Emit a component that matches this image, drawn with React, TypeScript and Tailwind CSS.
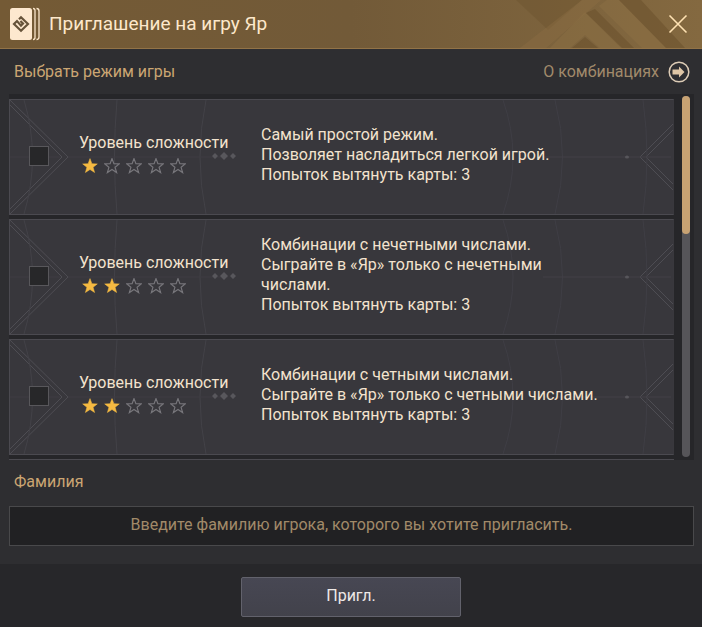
const modes = [
  {
    id: "simple",
    stars: 1,
    lines: ["Самый простой режим.", "Позволяет насладиться легкой игрой.", "Попыток вытянуть карты: 3"],
  },
  {
    id: "odd",
    stars: 2,
    lines: ["Комбинации с нечетными числами.", "Сыграйте в «Яр» только с нечетными числами.", "Попыток вытянуть карты: 3"],
  },
  {
    id: "even",
    stars: 2,
    lines: ["Комбинации с четными числами.", "Сыграйте в «Яр» только с четными числами.", "Попыток вытянуть карты: 3"],
  },
];

function CardsIcon() {
  return (
    <svg className="relative" width="30" height="34" viewBox="0 0 30 34" fill="none" aria-hidden="true">
      <path d="M23 1.500q2 0 2 2v27q0 2-2 2M26.500 1.500q2.500 0 2.500 2.500v26q0 2.500-2.500 2.500" stroke="#fbe6cb" strokeWidth="1.300" />
      <rect x="0" y="1" width="22" height="32" rx="2.500" fill="#fde8cf" />
      <path
        d="M9 12.200 11 10.200l7 6.800-7 6.800L4 17l3-3 4 4.600 2-2-2.600-2.600"
        stroke="#66533a"
        strokeWidth="2.200"
      />
    </svg>
  );
}

function HeaderOrnament() {
  return (
    <svg className="absolute top-0 right-0" width="190" height="48" viewBox="0 0 190 48" aria-hidden="true">
      <path d="M4 0h66L36 30z" fill="#6b522d" opacity=".4" />
      <path d="M70 0h19L34 48H8z" fill="#8f7044" opacity=".35" />
      <path d="M95 0h12l47 48h-24L87 6z" fill="#8f7044" opacity=".45" />
      <path d="M73 12 109 48H88L73 35 58 48H38z" fill="#8f7044" opacity=".45" />
      <path d="m83 9 39 39h-12L74 13z" fill="#684e29" opacity=".5" />
      <path d="M107 0h22l44 48h-19z" fill="#684e29" opacity=".5" />
      <path d="m73 37 13 11H60z" fill="#684e29" opacity=".5" />
    </svg>
  );
}

function Star({ filled }: { filled: boolean }) {
  return (
    <svg width="16" height="16" viewBox="0 0 16 16" aria-hidden="true">
      <path
        d="m8 .6 1.900 5.100 5.400.2-4.200 3.400 1.500 5.200L8 11.500l-4.600 3 1.500-5.200L.7 5.900l5.400-.2z"
        fill={filled ? "#f5ba42" : "none"}
        stroke={filled ? "#f5ba42" : "#77767b"}
        strokeWidth={filled ? 0.5 : 1.2}
      />
    </svg>
  );
}

function RowOrnament() {
  return (
    <>
      <svg className="absolute top-0 left-0" width="240" height="114" viewBox="0 0 240 114" fill="none" aria-hidden="true">
        <path d="M0 0l58 57L0 114M0 5l52 52-52 52" stroke="#4e4d53" />
        <path d="M14 0q17 57 0 114M107 0q-5 57 0 114M196 0q-12 57 0 114" stroke="#434248" />
        <path d="M0 57h50M58 57h160" stroke="#3e3d43" />
        <path d="m214 52 4 4-4 4-4-4zM205 53l3 3-3 3-3-3zM223 53l3 3-3 3-3-3z" fill="#58575c" />
      </svg>
      <svg className="absolute top-0 right-0" width="210" height="114" viewBox="0 0 210 114" fill="none" aria-hidden="true">
        <path d="M210 24l-33 33 33 33M210 30l-27 27 27 27" stroke="#4e4d53" />
        <path d="M92 0q15 57 0 114M40 0q20 57 0 114M180 0q8 57 0 114" stroke="#3f3e45" />
        <path d="M80 57h128" stroke="#424147" />
        <ellipse cx="164" cy="57" rx="2" ry="1.500" fill="#57565b" />
      </svg>
    </>
  );
}

function Mode({ mode }: { mode: (typeof modes)[number] }) {
  return (
    <label className="relative flex h-[116px] shrink-0 items-center border border-[#4b4a50] border-r-[#39383d] bg-[#38373c] pb-1">
      <RowOrnament />
      <input
        type="checkbox"
        className="relative mt-[2px] ml-[19px] size-5 shrink-0 appearance-none border border-[#58575b] bg-[#272729] checked:bg-[#c5a06b]"
      />
      <span className="relative ml-[30px] flex w-[182px] shrink-0 flex-col gap-[5px] pb-[3px]">
        <span className="whitespace-nowrap">Уровень сложности</span>
        <span className="ml-[3px] flex gap-[6px]">
          {[1, 2, 3, 4, 5].map((n) => (
            <Star key={n} filled={n <= mode.stars} />
          ))}
        </span>
      </span>
      <span className="relative block max-w-[348px]">
        {mode.lines.map((line) => (
          <span key={line} className="block">
            {line}
          </span>
        ))}
      </span>
    </label>
  );
}

export default function App() {
  return (
    <main className="flex min-h-screen flex-col bg-[#2e2e31] font-['Roboto','Noto_Sans',sans-serif] text-base leading-5 text-[#f3e3ce]">
      <header className="relative flex h-[49px] items-center gap-[9px] border-b border-[#927347] bg-linear-to-r from-[#745a35] via-[#725a38] to-[#846940] pr-3 pl-[10px]">
        <HeaderOrnament />
        <CardsIcon />
        <h1 className="relative flex-1 text-[19px] text-[#fde8cb]">Приглашение на игру Яр</h1>
        <button type="button" aria-label="Закрыть" className="relative flex size-6 items-center justify-center">
          <svg width="20" height="20" viewBox="0 0 20 20" stroke="#ffe2b3" strokeWidth="1.600" aria-hidden="true">
            <path d="m1.500 1.500 17 17M18.500 1.500l-17 17" />
          </svg>
        </button>
      </header>

      <div className="flex h-[45px] items-center justify-between pr-3 pl-[14px]">
        <h2 className="text-[#cba673]">Выбрать режим игры</h2>
        <button type="button" className="flex items-center gap-[9px] text-[#a18a6b]">
          О комбинациях
          <svg width="22" height="22" viewBox="0 0 22 22" aria-hidden="true">
            <circle cx="11" cy="11" r="9.800" fill="none" stroke="#dccbb5" strokeWidth="1.500" />
            <path d="M4.500 8.500H11V5.500l5.500 5.500-5.500 5.500v-3H4.500z" fill="#dfc6a6" />
          </svg>
        </button>
      </div>

      <section className="mr-2 ml-[9px] flex bg-[#262629]">
        <div className="flex flex-1 flex-col gap-1 border-b border-[#4b4a50] pt-[5px] pb-1">
          {modes.map((mode) => (
            <Mode key={mode.id} mode={mode} />
          ))}
        </div>
        <div className="mt-[2px] mr-1 mb-[3px] ml-2 w-2 rounded-full bg-[#565559]">
          <div className="h-[138px] rounded-full bg-[#c7a273]" />
        </div>
      </section>

      <div className="flex flex-col gap-[14px] pt-3 pr-2 pb-[18px] pl-[9px]">
        <label htmlFor="family" className="pl-[5px] text-[#cba673]">
          Фамилия
        </label>
        <input
          id="family"
          type="text"
          placeholder="Введите фамилию игрока, которого вы хотите пригласить."
          className="h-10 w-full border border-[#49494b] bg-[#212123] pb-1 text-center placeholder:text-[#a18a69] placeholder:opacity-100"
        />
      </div>

      <footer className="flex flex-1 items-start justify-center bg-[#27272a] pt-[13px] pb-[10px]">
        <button
          type="button"
          className="h-10 w-[220px] rounded-xs border border-[#62626c] bg-linear-to-b from-[#474753] to-[#42424b] pb-[2px] text-[#eee9e7]"
        >
          Пригл.
        </button>
      </footer>
    </main>
  );
}
